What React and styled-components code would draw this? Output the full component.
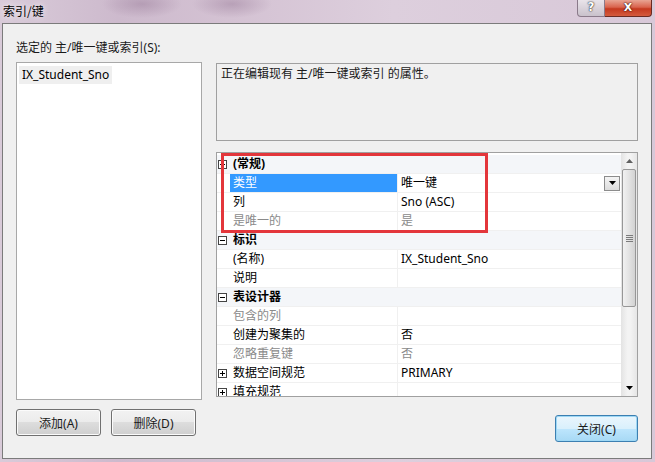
import React from 'react'
import styled, { createGlobalStyle } from 'styled-components'

const GlobalStyle = createGlobalStyle`
  html, body {
    margin: 0;
    padding: 0;
    background: #d6c6d6;
  }
  body {
    font-family: "Noto Sans", "Noto Sans CJK SC", sans-serif;
    font-size: 12px;
    color: #000;
  }
`

const rows = [
  { type: 'category', name: '(常规)', open: true },
  { name: '类型', value: '唯一键', selected: true, dropdown: true },
  { name: '列', value: 'Sno (ASC)' },
  { name: '是唯一的', value: '是', muted: true },
  { type: 'category', name: '标识', open: true },
  { name: '(名称)', value: 'IX_Student_Sno' },
  { name: '说明', value: '' },
  { type: 'category', name: '表设计器', open: true },
  { name: '包含的列', value: '', muted: true },
  { name: '创建为聚集的', value: '否' },
  { name: '忽略重复键', value: '否', muted: true },
  { name: '数据空间规范', value: 'PRIMARY', expandable: true },
  { name: '填充规范', value: '', expandable: true },
]

function ExpandBox({ open }) {
  return (
    <svg width="9" height="9" viewBox="0 0 9 9">
      <rect x="0.5" y="0.5" width="8" height="8" fill="#fff" stroke="#444" />
      <line x1="2" y1="4.5" x2="7" y2="4.5" stroke="#000" />
      {!open && <line x1="4.5" y1="2" x2="4.5" y2="7" stroke="#000" />}
    </svg>
  )
}

function Arrow({ up }) {
  return (
    <svg width="7" height="4" viewBox="0 0 7 4">
      <path d={up ? 'M0 4 L3.5 0 L7 4 Z' : 'M0 0 L7 0 L3.5 4 Z'} fill={up ? '#606060' : '#000'} />
    </svg>
  )
}

function PropertyRow({ row }) {
  if (row.type === 'category') {
    return (
      <Row $category>
        <Margin><ExpandBox open={row.open} /></Margin>
        <CategoryName>{row.name}</CategoryName>
      </Row>
    )
  }
  return (
    <Row>
      <Margin>{row.expandable && <ExpandBox open={false} />}</Margin>
      <Name $selected={row.selected} $muted={row.muted}>{row.name}</Name>
      <Value $muted={row.muted}>
        <span>{row.value}</span>
        {row.dropdown && <DropButton><Arrow /></DropButton>}
      </Value>
    </Row>
  )
}

export default function App() {
  return (
    <>
      <GlobalStyle />
      <Window>
        <TitleBar>
          <Title>索引/键</Title>
          <Controls>
            <HelpButton>?</HelpButton>
            <CloseButton>X</CloseButton>
          </Controls>
        </TitleBar>
        <Body>
          <LeftColumn>
            <Label>选定的 主/唯一键或索引(S):</Label>
            <ListBox>
              <ListItem>IX_Student_Sno</ListItem>
            </ListBox>
            <ButtonRow>
              <Button>添加(A)</Button>
              <Button>删除(D)</Button>
            </ButtonRow>
          </LeftColumn>
          <RightColumn>
            <Description>正在编辑现有 主/唯一键或索引 的属性。</Description>
            <PropGrid>
              <Rows>
                {rows.map((r, i) => <PropertyRow key={i} row={r} />)}
              </Rows>
              <ScrollBar>
                <ScrollArrow><Arrow up /></ScrollArrow>
                <Track>
                  <Thumb>
                    <Grip />
                  </Thumb>
                </Track>
                <ScrollArrow><Arrow /></ScrollArrow>
              </ScrollBar>
              <Highlight />
            </PropGrid>
            <Footer>
              <Button $primary $wide>关闭(C)</Button>
            </Footer>
          </RightColumn>
        </Body>
      </Window>
    </>
  )
}

const Window = styled.div`
  width: 655px;
  height: 462px;
  box-sizing: border-box;
  padding: 0 3px 3px 2px;
  display: flex;
  flex-direction: column;
  background: linear-gradient(90deg, #d9cbd9 0%, #cdbacd 18%, #d4c2d3 35%, #ddcfdd 60%, #d8c8d8 100%);
`

const TitleBar = styled.div`
  height: 23px;
  display: flex;
  justify-content: space-between;
  align-items: flex-start;
  background:
    radial-gradient(ellipse 40px 14px at 140px 4px, rgba(150, 120, 150, 0.45), transparent),
    radial-gradient(ellipse 40px 14px at 230px 4px, rgba(150, 120, 150, 0.45), transparent);
`

const Title = styled.div`
  padding: 3px 0 0 1px;
  font-family: "Noto Sans CJK SC", sans-serif;
  font-size: 12px;
  line-height: 16px;
  color: #000;
  text-shadow: 0 0 6px #fff;
`

const Controls = styled.div`
  display: flex;
  margin-right: 0;
`

const HelpButton = styled.div`
  width: 26px;
  height: 16px;
  border: 1px solid #8a7a8a;
  border-top: none;
  border-radius: 0 0 0 4px;
  background: linear-gradient(#e9e4ea, #c9c1cb);
  color: #fff;
  font: bold 12px/15px "DejaVu Sans", sans-serif;
  text-align: center;
  text-shadow: 0 0 2px #333, 0 0 1px #000;
`

const CloseButton = styled.div`
  width: 46px;
  height: 16px;
  border: 1px solid #6a2a22;
  border-top: none;
  border-left: none;
  border-radius: 0 0 4px 0;
  background: linear-gradient(#e8a493 0%, #d9634d 45%, #c5391f 55%, #d45a3e 100%);
  color: #fff;
  font: bold 11px/15px "DejaVu Sans", sans-serif;
  text-align: center;
  text-shadow: 0 0 2px #4a0f08, 0 0 1px #000;
`

const Body = styled.div`
  flex: 1;
  display: grid;
  grid-template-columns: 186px 1fr;
  column-gap: 14px;
  padding: 16px 13px 0 13px;
  background: #f0f0f0;
  border: 1px solid #7b7b7b;
  font-family: "Noto Sans", "Noto Sans CJK SC", sans-serif;
`

const LeftColumn = styled.div`
  display: flex;
  flex-direction: column;
`

const Label = styled.div`
  height: 16px;
  line-height: 16px;
  margin-bottom: 6px;
  color: #1a1a1a;
`

const ListBox = styled.div`
  height: 338px;
  box-sizing: border-box;
  background: #fff;
  border: 1px solid #a8a8a8;
  padding: 3px 2px;
`

const ListItem = styled.div`
  display: inline-block;
  padding: 0 3px;
  line-height: 18px;
  background: #efefef;
  color: #000;
`

const ButtonRow = styled.div`
  display: flex;
  gap: 10px;
  margin-top: 9px;
`

const Button = styled.div`
  width: ${p => (p.$wide ? '83px' : '85px')};
  height: 27px;
  box-sizing: border-box;
  display: flex;
  align-items: center;
  justify-content: center;
  border: 1px solid ${p => (p.$primary ? '#3c7fb1' : '#707070')};
  border-radius: 3px;
  color: #1a1a1a;
  box-shadow: inset 0 0 0 1px ${p => (p.$primary ? '#9ed8f5' : '#fbfbfb')};
  background: ${p =>
    p.$primary
      ? 'linear-gradient(#eaf6fd 0%, #d9f0fc 50%, #bee6fd 50%, #a7d9f5 100%)'
      : 'linear-gradient(#f2f2f2 0%, #ebebeb 50%, #dddddd 50%, #cfcfcf 100%)'};
`

const RightColumn = styled.div`
  display: flex;
  flex-direction: column;
  padding-top: 23px;
`

const Description = styled.div`
  height: 78px;
  box-sizing: border-box;
  border: 1px solid #a0a0a0;
  padding: 2px 4px;
  line-height: 16px;
  color: #1a1a1a;
  background: #f0f0f0;
`

const PropGrid = styled.div`
  position: relative;
  margin-top: 11px;
  height: 245px;
  box-sizing: border-box;
  border: 1px solid #a0a0a0;
  background: #fff;
  display: flex;
  overflow: hidden;
`

const Rows = styled.div`
  flex: 1;
  padding-top: 2px;
  overflow: hidden;
`

const Row = styled.div`
  display: grid;
  grid-template-columns: 13px 167px 1fr;
  height: 19px;
  box-sizing: border-box;
  border-bottom: 1px solid #f0f0f0;
  background: ${p => (p.$category ? '#f4f6f9' : '#fff')};
`

const Margin = styled.div`
  display: flex;
  align-items: center;
  padding-left: 1px;
`

const CategoryName = styled.div`
  grid-column: 2 / 4;
  padding-left: 3px;
  font-weight: bold;
  line-height: 18px;
`

const Name = styled.div`
  padding-left: 3px;
  line-height: 18px;
  background: ${p => (p.$selected ? '#3399ff' : 'transparent')};
  color: ${p => (p.$selected ? '#fff' : p.$muted ? '#8a8a8a' : '#000')};
`

const Value = styled.div`
  display: flex;
  justify-content: space-between;
  align-items: center;
  padding-left: 3px;
  border-left: 1px solid #f0f0f0;
  line-height: 18px;
  color: ${p => (p.$muted ? '#8a8a8a' : '#000')};
`

const DropButton = styled.div`
  width: 16px;
  height: 15px;
  box-sizing: border-box;
  margin-right: 1px;
  display: flex;
  align-items: center;
  justify-content: center;
  border: 1px solid #8c8c8c;
  background: linear-gradient(#f4f4f4, #dcdcdc);
`

const ScrollBar = styled.div`
  width: 16px;
  display: flex;
  flex-direction: column;
  background: linear-gradient(90deg, #e3e3e3, #f3f3f3 40%, #f3f3f3 60%, #e6e6e6);
`

const ScrollArrow = styled.div`
  height: 16px;
  display: flex;
  align-items: center;
  justify-content: center;
`

const Track = styled.div`
  flex: 1;
  padding: 0 1px;
`

const Thumb = styled.div`
  height: 138px;
  box-sizing: border-box;
  border: 1px solid #979797;
  border-radius: 2px;
  background: linear-gradient(90deg, #f1f1f1, #e3e3e3 50%, #d2d2d2);
  display: flex;
  align-items: center;
  justify-content: center;
`

const Grip = styled.div`
  width: 7px;
  height: 7px;
  background: repeating-linear-gradient(#7b7b7b 0 1px, transparent 1px 2px);
`

const Highlight = styled.div`
  position: absolute;
  left: 4px;
  top: 0;
  width: 267px;
  height: 80px;
  box-sizing: border-box;
  border: 3px solid #e3363b;
  pointer-events: none;
`

const Footer = styled.div`
  display: flex;
  justify-content: flex-end;
  margin-top: 18px;
`
